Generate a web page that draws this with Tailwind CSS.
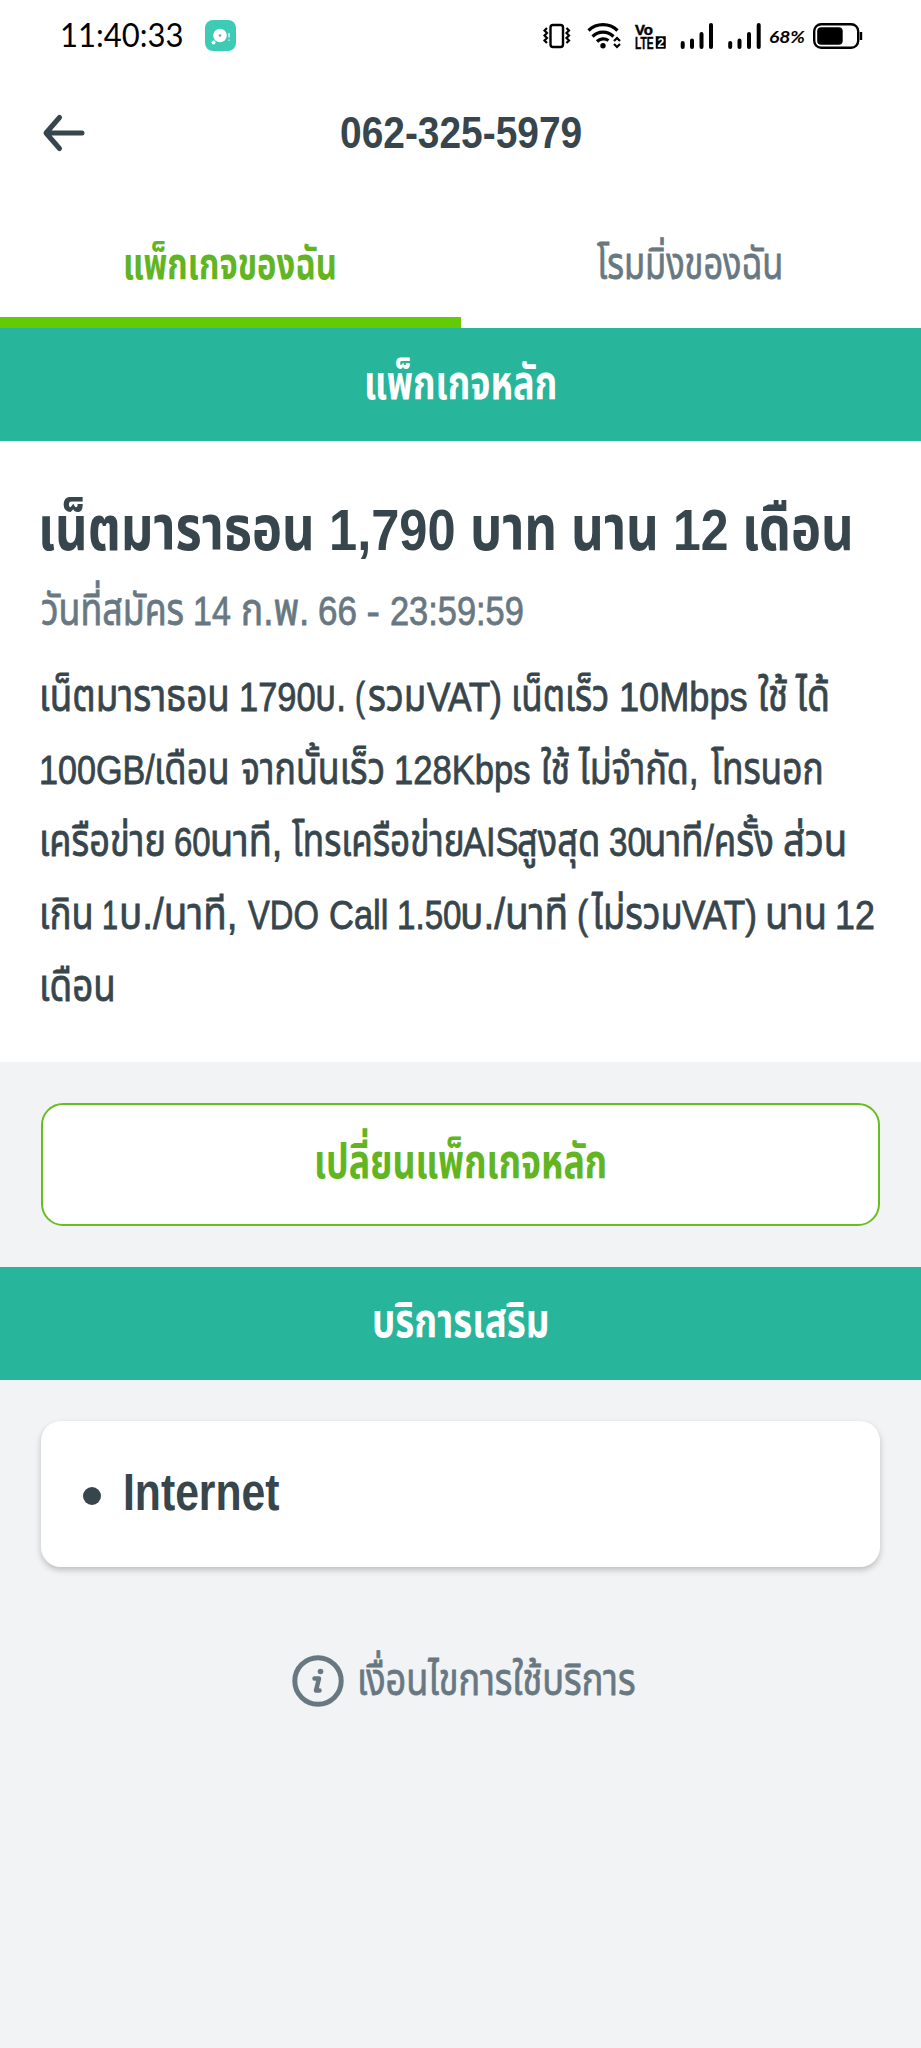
<!DOCTYPE html>
<html lang="th">
<head>
    <meta charset="UTF-8">
    <meta name="viewport" content="width=device-width, initial-scale=1.0">
    <title>แพ็กเกจของฉัน</title>
    <script src="https://cdn.jsdelivr.net/npm/@tailwindcss/browser@4"></script>
</head>
<body class="bg-[#f1f3f5] font-['Liberation_Sans','Noto_Sans_Thai',sans-serif] text-[#37454c] overflow-x-hidden">
    <div class="w-[921px] min-h-[2048px]">
        <!-- Status bar -->
        <div class="flex items-center h-[70px] pl-[62px] bg-white text-black">
            <span data-w="120" class="font-['Lato','Liberation_Sans',sans-serif] text-[32px] leading-[70px]">11:40:33</span>
            <svg class="ml-[23px] w-[31px] h-[31px]" viewBox="0 0 31 31">
                <rect width="31" height="31" rx="8" fill="#3ecbb5"/>
                <circle cx="15" cy="15.5" r="6.8" fill="#fff"/>
                <circle cx="15" cy="15.5" r="1.3" fill="#7aa"/>
                <circle cx="8.5" cy="22.5" r="2" fill="#fff"/>
                <path d="M24 13v4.5M24 19.5v1.2" stroke="#fff" stroke-width="1.2"/>
            </svg>
            <svg class="ml-[304px] w-[330px] h-[40px]" viewBox="540 15 330 40" fill="none" stroke="#000">
                <!-- vibrate -->
                <rect x="550.5" y="25" width="12.5" height="22" rx="2.5" stroke-width="2.4"/>
                <path d="M547 28l-2.500 2.500 2.500 2.500-2.500 2.500 2.500 2.500-2.500 2.500 2.500 2.500M566.500 28l2.500 2.500-2.500 2.500 2.500 2.500-2.500 2.500 2.500 2.500-2.500 2.500" stroke-width="2.200"/>
                <!-- wifi -->
                <path d="M588.500 30.500a21 21 0 0 1 29 0M592.500 36.500a15 15 0 0 1 21 0M597 41.500a9 9 0 0 1 11.500-1" stroke-width="3.200"/>
                <circle cx="603" cy="45.800" r="2.700" fill="#000" stroke="none"/>
                <path d="M614 41l3-3 3 3M614 44l3 3 3-3" stroke-width="2.200"/>
                <!-- VoLTE 2 -->
                <g fill="#000" stroke="#000" stroke-width="0.5" font-family="Liberation Sans" font-weight="bold">
                    <text x="635" y="35" font-size="15" textLength="18" lengthAdjust="spacingAndGlyphs">Vo</text>
                    <text x="635" y="48.500" font-size="16" textLength="18.500" lengthAdjust="spacingAndGlyphs">LTE</text>
                    <rect x="656" y="36.500" width="9.500" height="12"/>
                    <text x="657.500" y="47" font-size="12" fill="#fff" stroke="none">2</text>
                </g>
                <!-- signal -->
                <path d="M682.700 43v4M692 40.500v6.500M701.500 34v13M711 25v22M730.200 43v4M739.500 40.500v6.500M749 34v13M758.700 25v22" stroke-width="4" stroke-linecap="round"/>
                <text x="769" y="43" font-size="17" font-family="Lato" font-weight="bold" font-style="italic" fill="#000" stroke="none" textLength="36" lengthAdjust="spacingAndGlyphs">68%</text>
                <!-- battery -->
                <rect x="814.200" y="24.200" width="44" height="23.600" rx="7" stroke-width="2.400"/>
                <rect x="817.200" y="27.200" width="25.500" height="17.500" rx="4" fill="#000" stroke="none"/>
                <path d="M861 32v8" stroke-width="2.400"/>
            </svg>
        </div>

        <!-- Header -->
        <header class="relative flex items-center justify-center h-[130px] pb-[5px] bg-white">
            <svg class="absolute left-[42px] top-[43px] w-[44px] h-[40px]" viewBox="0 0 44 40" fill="none" stroke="#37454c" stroke-width="5" stroke-linecap="round" stroke-linejoin="round">
                <path d="M40 20H5M17.500 4.500L4 20l13.500 15.500"/>
            </svg>
            <h1 data-w="240" class="text-[44px] font-bold">062-325-5979</h1>
        </header>

        <!-- Tabs -->
        <nav class="grid grid-cols-2 h-[128px] bg-white text-[44px]">
            <a class="flex items-center justify-center pt-[10px] border-b-[11px] border-[#62cb03] text-[#62b522] font-bold"><span data-w="209">แพ็กเกจของฉัน</span></a>
            <a class="flex items-center justify-center pt-[10px] pr-[3px] border-b-[11px] border-transparent text-[#687882] [-webkit-text-stroke:0.8px]"><span data-w="184">โรมมิ่งของฉัน</span></a>
        </nav>

        <h2 class="flex items-center justify-center h-[113px] pb-[4px] bg-[#27b59b] text-white text-[48px] font-bold"><span data-w="188">แพ็กเกจหลัก</span></h2>

        <!-- Main package -->
        <section class="h-[621px] pt-[42px] pl-[42px] bg-white">
            <div class="flex items-baseline gap-[20px] h-[91px] text-[63px] leading-[90px] font-bold">
                <span data-w="269">เน็ตมาราธอน</span>
                <span data-w="122" class="text-[58px]">1,790</span>
                <span data-w="81">บาท</span>
                <span data-w="81">นาน</span>
                <span data-w="51" class="text-[58px]">12</span>
                <span data-w="104">เดือน</span>
            </div>
            <div class="flex items-baseline gap-[12.5px] h-[86px] text-[44px] leading-[72px] text-[#687882] [-webkit-text-stroke:0.8px]">
                <span data-w="141">วันที่สมัคร</span>
                <span data-w="35" class="text-[40px]">14</span>
                <span data-w="64">ก.พ.</span>
                <span data-w="36" class="text-[40px]">66</span>
                <span data-w="11" class="text-[40px]">-</span>
                <span data-w="131" class="text-[40px]">23:59:59</span>
            </div>
            <div class="text-[44px] leading-[72px] [-webkit-text-stroke:0.8px]">
                <div class="flex items-baseline gap-[14px] h-[72.5px]">
                    <span data-w="185">เน็ตมาราธอน</span>
                    <div class="flex items-baseline gap-[3px]"><span data-w="73" class="text-[40px]">1790</span><span data-w="26">บ.</span></div>
                    <div class="flex items-baseline gap-[3px]"><span data-w="9" class="text-[40px]">(</span><span data-w="55">รวม</span><span data-w="73" class="text-[40px]">VAT)</span></div>
                    <span data-w="93">เน็ตเร็ว</span>
                    <span data-w="125" class="text-[40px]">10Mbps</span>
                    <span data-w="29" class="-ml-[3px]">ใช้</span>
                    <span data-w="33" class="-ml-[7px]">ได้</span>
                </div>
                <div class="flex items-baseline gap-[14px] h-[72.5px]">
                    <div class="flex items-baseline gap-[2px]"><span data-w="114" class="text-[40px]">100GB/</span><span data-w="70">เดือน</span></div>
                    <span data-w="141">จากนั้นเร็ว</span>
                    <span data-w="133" class="text-[40px]">128Kbps</span>
                    <span data-w="28" class="-ml-[3px]">ใช้</span>
                    <span data-w="118" class="-ml-[5px]">ไม่จำกัด,</span>
                    <span data-w="110">โทรนอก</span>
                </div>
                <div class="flex items-baseline gap-[12.5px] h-[72.5px]">
                    <span data-w="121">เครือข่าย</span>
                    <div class="flex items-baseline gap-[3px]"><span data-w="34" class="text-[40px]">60</span><span data-w="67">นาที,</span></div>
                    <div class="flex items-baseline gap-[1px]"><span data-w="170">โทรเครือข่าย</span><span data-w="54" class="text-[40px]">AIS</span><span data-w="79">สูงสุด</span></div>
                    <div class="flex items-baseline gap-[2px]"><span data-w="35" class="text-[40px]">30</span><span data-w="126">นาที/ครั้ง</span></div>
                    <span data-w="60">ส่วน</span>
                </div>
                <div class="flex items-baseline gap-[13px] h-[72.5px]">
                    <span data-w="49">เกิน</span>
                    <div class="flex items-baseline gap-[4px]"><span data-w="13" class="text-[40px]">1</span><span data-w="113">บ./นาที,</span></div>
                    <span data-w="70" class="text-[40px]">VDO</span>
                    <span data-w="56" class="text-[40px]">Call</span>
                    <div class="flex items-baseline gap-[3px]"><span data-w="61" class="text-[40px]">1.50</span><span data-w="103">บ./นาที</span></div>
                    <div class="flex items-baseline gap-[2px]"><span data-w="10" class="text-[40px]">(</span><span data-w="89">ไม่รวม</span><span data-w="73" class="text-[40px]">VAT)</span></div>
                    <span data-w="57">นาน</span>
                    <span data-w="36" class="text-[40px]">12</span>
                </div>
                <div class="flex items-baseline h-[72.5px]">
                    <span data-w="71">เดือน</span>
                </div>
            </div>
        </section>

        <div class="px-[41px] pt-[41px] pb-[41px]">
            <button class="flex items-center justify-center w-full h-[123px] pb-[6px] bg-white border-[2px] border-[#67bf1f] rounded-[22px] text-[#62b522] text-[48px] font-bold"><span data-w="288">เปลี่ยนแพ็กเกจหลัก</span></button>
        </div>

        <h2 class="flex items-center justify-center h-[113px] pb-[6px] bg-[#27b59b] text-white text-[48px] font-bold"><span data-w="173">บริการเสริม</span></h2>

        <!-- Extra services -->
        <div class="px-[41px] pt-[41px]">
            <div class="flex items-center h-[146px] pl-[42px] bg-white rounded-[20px] shadow-[0_3px_6px_rgba(0,0,0,0.22)]">
                <span class="w-[18px] h-[18px] mt-[3px] rounded-full bg-[#37454c]"></span>
                <span data-w="154" class="ml-[25px] pb-[2px] text-[51px] font-bold">Internet</span>
            </div>
        </div>

        <div class="flex items-center justify-center gap-[16px] mt-[74px] pl-[5px] h-[80px] text-[#687882]">
            <svg class="w-[52px] h-[52px]" viewBox="0 0 52 52">
                <circle cx="26" cy="26" r="23.200" fill="none" stroke="#687882" stroke-width="5"/>
                <circle cx="28.500" cy="16.500" r="2.800" fill="#687882"/>
                <path d="M22.500 23.500h4.500l-3 12h3.500" fill="none" stroke="#687882" stroke-width="4.500" stroke-linejoin="round" stroke-linecap="round"/>
            </svg>
            <span data-w="274" class="pb-[3px] text-[44px] [-webkit-text-stroke:0.8px]">เงื่อนไขการใช้บริการ</span>
        </div>
    </div>

    <script>
        const ctx = document.createElement('canvas').getContext('2d');

        // Condense each label so its ink is exactly data-w pixels wide
        function fitLabels() {
            document.querySelectorAll('[data-w]').forEach(el => {
                el.style.cssText = 'flex-shrink: 0; white-space: nowrap; transform-origin: left';
                const style = getComputedStyle(el);
                ctx.font = `${style.fontWeight} ${style.fontSize} ${style.fontFamily}`;
                const m = ctx.measureText(el.textContent);
                const width = Number(el.dataset.w);
                const scale = width / (m.actualBoundingBoxLeft + m.actualBoundingBoxRight);
                const shift = m.actualBoundingBoxLeft * scale;
                const base = parseFloat(style.marginLeft) || 0;
                const natural = el.offsetWidth;

                el.style.transform = `scaleX(${scale})`;
                el.style.marginLeft = `${base + shift}px`;
                el.style.marginRight = `${width - shift - natural}px`;
            });
        }

        fitLabels();
        window.addEventListener('load', fitLabels);
    </script>
</body>
</html>
